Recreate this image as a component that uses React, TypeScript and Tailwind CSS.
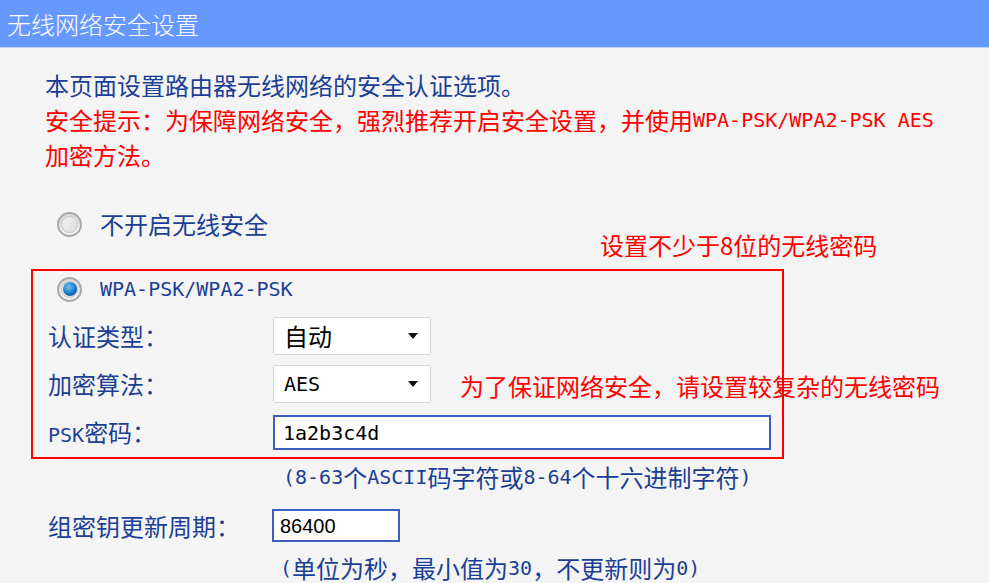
import React from "react";

const cjk = "font-['Noto_Sans_CJK_SC',sans-serif]";
const mono = "font-['DejaVu_Sans_Mono','Liberation_Mono','Noto_Sans_CJK_SC',monospace]";

function Radio({ checked }: { checked?: boolean }) {
  return (
    <span className="w-[25px] h-[25px] rounded-full border-2 border-[#a9a9a9] bg-gradient-to-b from-[#d9d9d9] to-[#f7f7f7] flex items-center justify-center shrink-0">
      <span className="w-[17px] h-[17px] rounded-full bg-gradient-to-br from-[#f4f4f4] to-[#dcdcdc] border border-[#c4c4c4] flex items-center justify-center">
        {checked && (
          <span className="w-[14px] h-[14px] rounded-full bg-[radial-gradient(circle_at_40%_35%,#6cc6f5,#1577c4_55%,#0a3f78)]" />
        )}
      </span>
    </span>
  );
}

function Select({ value, isMono }: { value: string; isMono?: boolean }) {
  return (
    <div className="w-[158px] h-[38px] bg-white border border-[#d6d6d6] rounded-[3px] flex items-center justify-between pl-[10px] pr-[12px]">
      <span className={`${isMono ? mono + " text-[20px]" : cjk + " text-[24px]"} text-black leading-none`}>
        {value}
      </span>
      <svg width="10" height="6" viewBox="0 0 10 6">
        <path d="M0 0 H10 L5 6 Z" fill="#111" />
      </svg>
    </div>
  );
}

export default function App() {
  return (
    <div className={`relative w-[989px] h-[583px] overflow-hidden bg-[#f4f4f4] ${cjk}`}>
      <div className="h-[48px] bg-[#6699ff] border-b border-[#c3d5f7] flex items-center pl-[7px]">
        <span className="text-white text-[24px] leading-none font-light">无线网络安全设置</span>
      </div>

      <div className="pl-[45px] mt-[19px] text-[24px] whitespace-nowrap">
        <p className="h-[35px] flex items-center text-[#1b3f94]">本页面设置路由器无线网络的安全认证选项。</p>
        <p className="h-[35px] flex items-center text-[#ff0000]">
          安全提示：为保障网络安全，强烈推荐开启安全设置，并使用
          <span className={`${mono} text-[20px]`}>WPA-PSK/WPA2-PSK AES</span>
        </p>
        <p className="h-[35px] flex items-center text-[#ff0000]">加密方法。</p>
      </div>

      <div className="mt-[34px] h-[36px] pl-[57px] flex items-center gap-[18px]">
        <Radio />
        <span className="text-[24px] leading-none text-[#1b3f94]">不开启无线安全</span>
      </div>

      <div className="ml-[31px] mt-[27px] w-[753px] border-2 border-[#ff0000] pb-[7px]">
        <div className="h-[36px] pl-[24px] flex items-center gap-[18px]">
          <Radio checked />
          <span className={`${mono} text-[20px] leading-none text-[#1b3f94]`}>WPA-PSK/WPA2-PSK</span>
        </div>
        <div className="mt-[10px] flex items-center pl-[15px]">
          <span className="w-[225px] text-[24px] leading-none text-[#1b3f94]">认证类型：</span>
          <Select value="自动" />
        </div>
        <div className="mt-[10px] flex items-center pl-[15px]">
          <span className="w-[225px] text-[24px] leading-none text-[#1b3f94]">加密算法：</span>
          <Select value="AES" isMono />
        </div>
        <div className="mt-[12px] flex items-center pl-[15px]">
          <span className="w-[225px] text-[24px] leading-none text-[#1b3f94]">
            <span className={`${mono} text-[20px]`}>PSK</span>密码：
          </span>
          <div className="w-[498px] h-[35px] bg-white border-2 border-[#3a5fc0] flex items-center pl-[8px]">
            <span className={`${mono} text-[20px] leading-none text-black`}>1a2b3c4d</span>
          </div>
        </div>
      </div>

      <div className="h-[36px] pl-[283px] flex items-center text-[24px] text-[#1b3f94] whitespace-nowrap">
        <span className={`${mono} text-[20px]`}>(8-63</span>个<span className={`${mono} text-[20px]`}>ASCII</span>码字符或<span className={`${mono} text-[20px]`}>8-64</span>个十六进制字符<span className={`${mono} text-[20px]`}>)</span>
      </div>

      <div className="mt-[14px] flex items-center pl-[48px]">
        <span className="w-[224px] text-[24px] leading-none text-[#1b3f94]">组密钥更新周期：</span>
        <div className="w-[128px] h-[33px] bg-white border-2 border-[#3a5fc0] flex items-center pl-[6px]">
          <span className="text-[20px] leading-none text-black font-['Liberation_Sans',sans-serif]">86400</span>
        </div>
      </div>

      <div className="mt-[9px] h-[33px] pl-[280px] flex items-center text-[24px] text-[#1b3f94] whitespace-nowrap">
        <span className={`${mono} text-[20px]`}>(</span>单位为秒，最小值为<span className={`${mono} text-[20px]`}>30</span>，不更新则为<span className={`${mono} text-[20px]`}>0)</span>
      </div>

      <span className="absolute left-[600px] top-[229px] text-[24px] leading-[32px] text-[#ff0000] whitespace-nowrap">
        设置不少于8位的无线密码
      </span>
      <span className="absolute left-[460px] top-[370px] text-[24px] leading-[32px] text-[#ff0000] whitespace-nowrap">
        为了保证网络安全，请设置较复杂的无线密码
      </span>
    </div>
  );
}
